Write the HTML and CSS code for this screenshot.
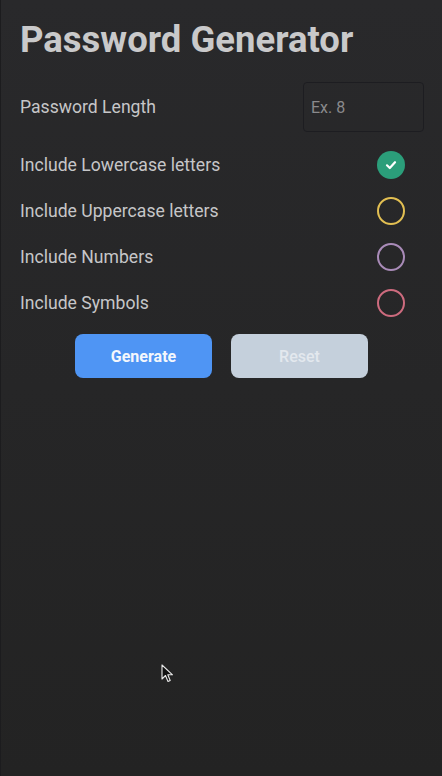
FILE: index.html
```html
<!DOCTYPE html>
<html>
<head>
<meta charset="utf-8">
<link rel="stylesheet" href="styles.css">
</head>
<body>
<div class="app">
  <h1 class="title">Password Generator</h1>
  <div class="row row-input">
    <span class="label">Password Length</span>
    <div class="input"><span class="placeholder">Ex. 8</span></div>
  </div>
  <div class="row">
    <span class="label">Include Lowercase letters</span>
    <span class="check green">
      <svg width="14" height="14" viewBox="0 0 14 14"><path d="M3 7.3 L5.8 10 L11 4.2" fill="none" stroke="#fff" stroke-width="2.2" stroke-linecap="round" stroke-linejoin="round"/></svg>
    </span>
  </div>
  <div class="row">
    <span class="label">Include Uppercase letters</span>
    <span class="check yellow"></span>
  </div>
  <div class="row">
    <span class="label">Include Numbers</span>
    <span class="check purple"></span>
  </div>
  <div class="row">
    <span class="label">Include Symbols</span>
    <span class="check pink"></span>
  </div>
  <div class="buttons">
    <div class="btn btn-primary">Generate</div>
    <div class="btn btn-secondary">Reset</div>
  </div>
</div>
<svg class="cursor" width="14" height="20" viewBox="0 0 14 20"><path d="M1 1 L1 15 L4.5 11.5 L7 17.5 L9.2 16.5 L6.8 10.8 L11.5 10.8 Z" fill="#111" stroke="#e8e8e8" stroke-width="1.1" stroke-linejoin="round"/></svg>
</body>
</html>
```
FILE: styles.css
```css
html, body {
  margin: 0;
  padding: 0;
  height: 100%;
}
body {
  background: linear-gradient(#29292b, #232323);
  font-family: Roboto, "Noto Sans", sans-serif;
  border-left: 1px solid #1c1c1e;
  box-sizing: border-box;
  position: relative;
  overflow: hidden;
}
.app {
  padding: 0 18px 0 19px;
}
.title {
  margin: 0;
  padding-top: 18px;
  font-size: 36.5px;
  line-height: 44px;
  font-weight: 700;
  color: #c9c9ca;
}
.row {
  display: flex;
  align-items: center;
  justify-content: space-between;
  height: 46px;
  padding-right: 19px;
}
.row-input {
  margin-top: 20px;
  height: 50px;
  padding-right: 0;
  margin-bottom: 10px;
}
.label {
  font-size: 17.6px;
  color: #c6c6c8;
}
.input {
  width: 121px;
  height: 50px;
  border: 1px solid #1d1d21;
  border-radius: 4px;
  box-sizing: border-box;
  display: flex;
  align-items: center;
  padding-left: 7px;
}
.placeholder {
  font-size: 16px;
  color: #8a8a8c;
}
.check {
  width: 28px;
  height: 28px;
  border-radius: 50%;
  box-sizing: border-box;
  display: flex;
  align-items: center;
  justify-content: center;
}
.green { background: #2b9e7a; }
.yellow { border: 2px solid #e2bf52; }
.purple { border: 2px solid #a98bb8; }
.pink { border: 2px solid #cd6b7e; }
.buttons {
  display: flex;
  justify-content: center;
  gap: 19px;
  margin-top: 8px;
  padding-right: 1px;
}
.btn {
  width: 137px;
  height: 44px;
  border-radius: 8px;
  display: flex;
  align-items: center;
  justify-content: center;
  font-size: 16px;
  font-weight: 700;
}
.btn-primary {
  background: #4f95f4;
  color: #f4f7fc;
}
.btn-secondary {
  background: #c5d0dc;
  color: #e3e8ee;
  font-weight: 500;
}
.cursor {
  position: absolute;
  left: 160px;
  top: 664px;
}
```
